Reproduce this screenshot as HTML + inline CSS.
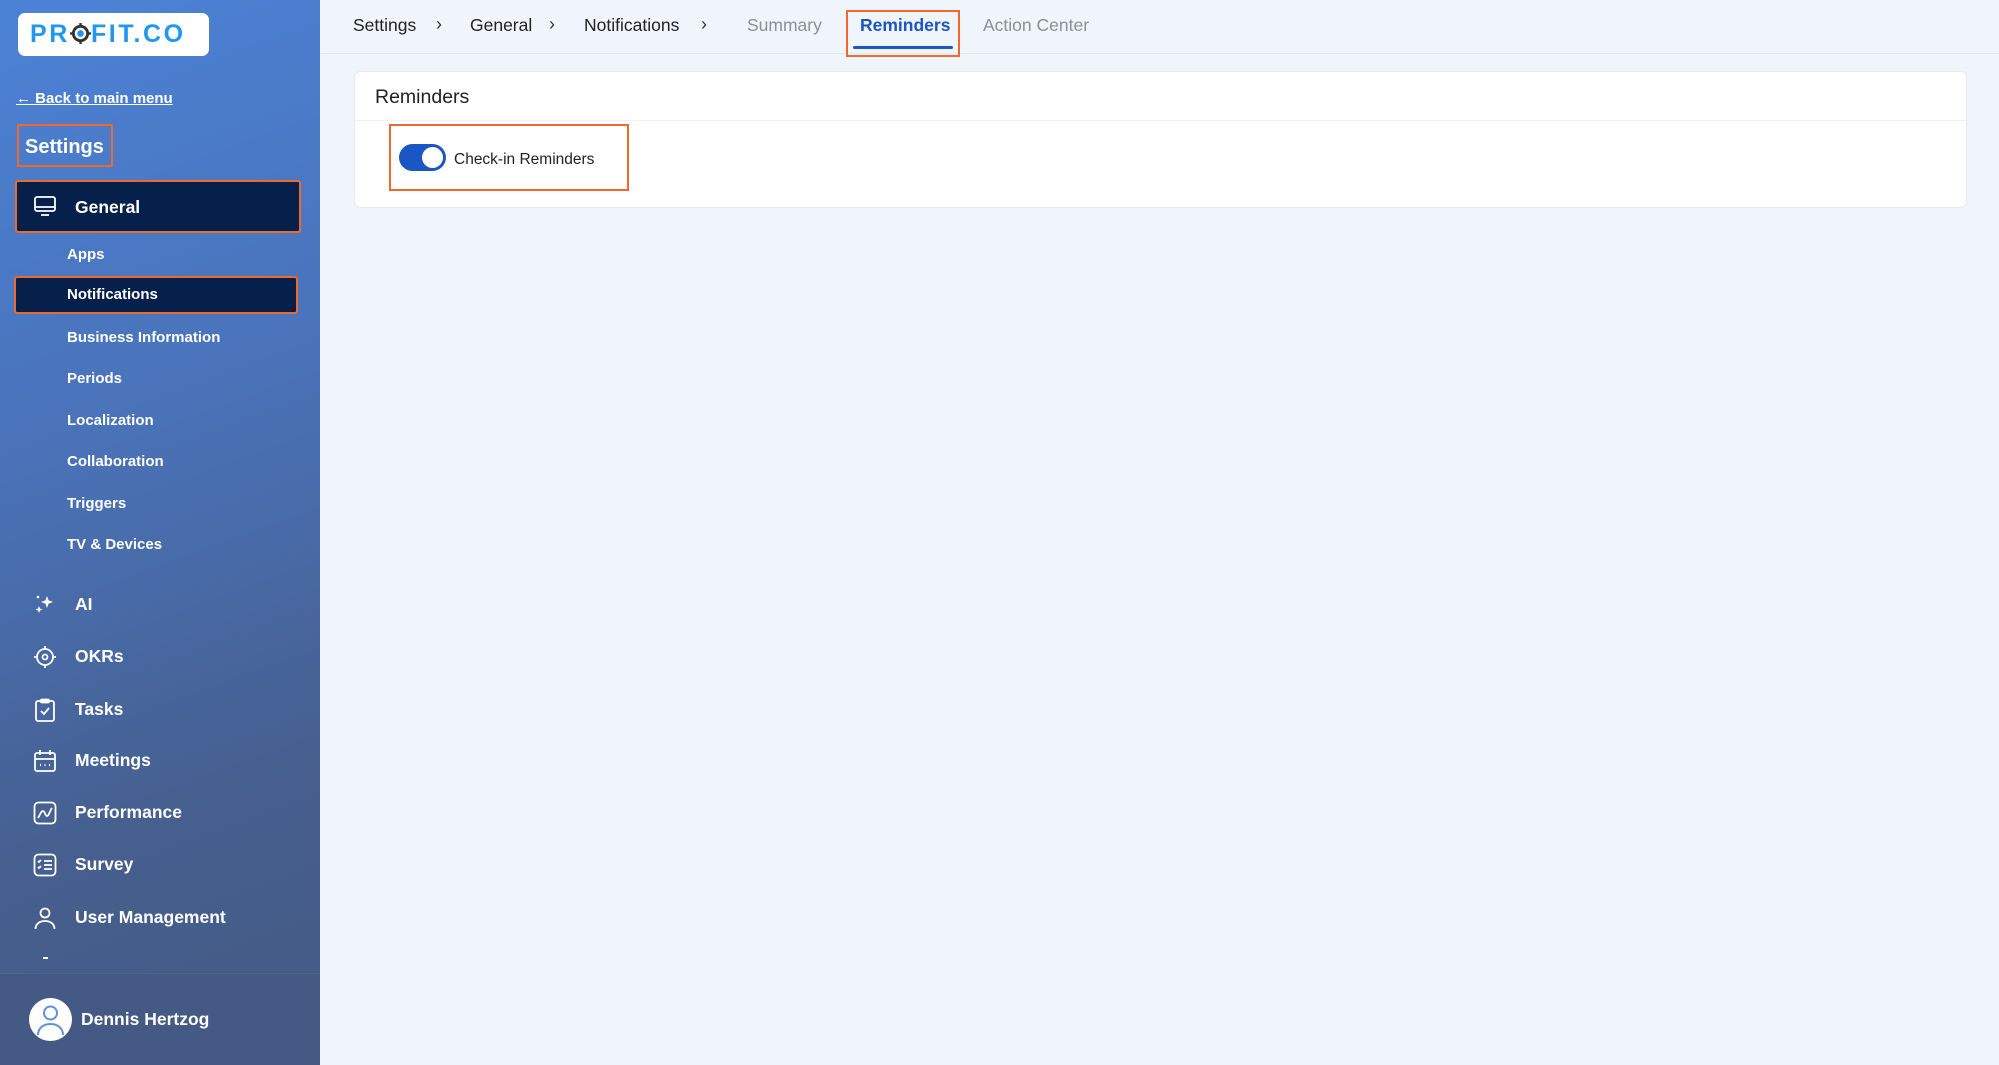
<!DOCTYPE html>
<html><head><meta charset="utf-8"><style>
*{margin:0;padding:0;box-sizing:border-box}
body{width:1999px;height:1065px;overflow:hidden;font-family:"Liberation Sans",sans-serif;background:#f0f4fb;position:relative}
.sb{position:absolute;left:0;top:0;width:320px;height:1065px;background:linear-gradient(160deg,#4b82d6 0%,#4a72b8 40%,#465f8e 75%,#445a84 100%);color:#fff}
.a{position:absolute;white-space:nowrap}
.logo{left:18px;top:13px;width:191px;height:43px;background:#fff;border-radius:7px;color:#2196f3;font-weight:bold;font-size:25px;letter-spacing:2.6px;line-height:43px;padding-left:12px}
.ob{border:2px solid #ee6a2c}
.sub{left:67px;font-size:15px;font-weight:bold}
.nav{left:75px;font-size:17.5px;font-weight:bold}
.ic{position:absolute;left:33px;width:24px;height:24px}
.top{position:absolute;left:320px;top:0;right:0;height:54px;border-bottom:1px solid #e2e7ef}
.bc{top:15px;font-size:17.5px;color:#222}
.chev{top:14px;font-size:18px;color:#333}
</style></head><body>
<div class="sb">
<div class="a logo">PR<span style="display:inline-block;width:21px;height:21px;vertical-align:-2px;position:relative"><svg width="21" height="21" viewBox="0 0 22 22"><circle cx="11" cy="11" r="7.5" fill="none" stroke="#333" stroke-width="3"/><line x1="11" y1="0" x2="11" y2="4" stroke="#333" stroke-width="2.5"/><line x1="11" y1="18" x2="11" y2="22" stroke="#333" stroke-width="2.5"/><line x1="0" y1="11" x2="4" y2="11" stroke="#333" stroke-width="2.5"/><line x1="18" y1="11" x2="22" y2="11" stroke="#333" stroke-width="2.5"/><circle cx="11" cy="11" r="3.5" fill="#2196f3"/></svg></span>FIT.CO</div>
<div class="a" style="left:16px;top:90px;font-size:15px;font-weight:bold;text-decoration:underline">← Back to main menu</div>
<div class="a ob" style="left:17px;top:124px;width:96px;height:43px;font-size:20px;font-weight:bold;padding:10px 0 0 6px">Settings</div>
<div class="a ob" style="left:15px;top:180px;width:286px;height:53px;background:#06204b;border-radius:3px"></div>
<svg class="ic" style="top:194px" viewBox="0 0 24 24" fill="none" stroke="#fff" stroke-width="1.8"><rect x="2" y="3" width="20" height="14" rx="2"/><line x1="2" y1="13" x2="22" y2="13"/><line x1="8" y1="21" x2="16" y2="21"/></svg>
<div class="a nav" style="top:197px">General</div>
<div class="a sub" style="top:246px">Apps</div>
<div class="a ob" style="left:14px;top:276px;width:284px;height:38px;background:#06204b;border-radius:3px"></div>
<div class="a sub" style="top:286px">Notifications</div>
<div class="a sub" style="top:329px">Business Information</div>
<div class="a sub" style="top:370px">Periods</div>
<div class="a sub" style="top:412px">Localization</div>
<div class="a sub" style="top:453px">Collaboration</div>
<div class="a sub" style="top:495px">Triggers</div>
<div class="a sub" style="top:536px">TV &amp; Devices</div>

<svg class="ic" style="top:593px" viewBox="0 0 24 24" fill="#fff"><path d="M14 3l1.6 4.4L20 9l-4.4 1.6L14 15l-1.6-4.4L8 9l4.4-1.6z"/><path d="M6 13l1 2.5 2.5 1-2.5 1L6 20l-1-2.5-2.5-1 2.5-1z"/><circle cx="5" cy="4" r="1.3"/></svg>
<div class="a nav" style="top:594px">AI</div>
<svg class="ic" style="top:645px" viewBox="0 0 24 24" fill="none" stroke="#fff" stroke-width="1.8"><circle cx="12" cy="12" r="8"/><circle cx="12" cy="12" r="2.5"/><path d="M12 1v4M12 19v4M1 12h4M19 12h4"/></svg>
<div class="a nav" style="top:646px">OKRs</div>
<svg class="ic" style="top:698px" viewBox="0 0 24 24" fill="none" stroke="#fff" stroke-width="1.8"><rect x="3" y="3" width="18" height="20" rx="2"/><rect x="8" y="1.5" width="8" height="3" rx="1"/><path d="M8 13l3 3 5-6"/></svg>
<div class="a nav" style="top:699px">Tasks</div>
<svg class="ic" style="top:749px" viewBox="0 0 24 24" fill="none" stroke="#fff" stroke-width="1.8"><rect x="2" y="4" width="20" height="18" rx="2"/><path d="M2 10h20M7 1v5M17 1v5"/><path d="M7 16h1M11.5 16h1M16 16h1" stroke-width="2.2"/></svg>
<div class="a nav" style="top:750px">Meetings</div>
<svg class="ic" style="top:801px" viewBox="0 0 24 24" fill="none" stroke="#fff" stroke-width="1.8"><rect x="1.5" y="1.5" width="21" height="21" rx="4"/><path d="M5 17c2-3 3-7 5-7s2 5 4 5 3-6 5-8"/></svg>
<div class="a nav" style="top:802px">Performance</div>
<svg class="ic" style="top:853px" viewBox="0 0 24 24" fill="none" stroke="#fff" stroke-width="1.8"><rect x="1.5" y="1.5" width="21" height="21" rx="4"/><path d="M11 8h8M11 12h8M11 16h8M5 8l1 1 2-2M5 14l1 1 2-2"/></svg>
<div class="a nav" style="top:854px">Survey</div>
<svg class="ic" style="top:906px" viewBox="0 0 24 24" fill="none" stroke="#fff" stroke-width="1.8"><circle cx="12" cy="7" r="4.5"/><path d="M2.5 23c0-5 4-8 9.5-8s9.5 3 9.5 8"/></svg>
<div class="a nav" style="top:907px">User Management</div>
<div class="a" style="left:43px;top:957px;width:5px;height:1.5px;background:#fff"></div>
<div class="a" style="left:0;top:973px;width:320px;height:92px;background:#445a84;border-top:1px solid #4e6591"></div>
<div class="a" style="left:29px;top:998px;width:43px;height:43px;border-radius:50%;background:#fff;overflow:hidden"><svg width="43" height="43" viewBox="0 0 43 43" fill="none" stroke="#5c8fd8" stroke-width="2"><circle cx="21.5" cy="15" r="6.5"/><path d="M9 37c0-7 5.5-11 12.5-11S34 30 34 37"/></svg></div>
<div class="a" style="left:81px;top:1009px;font-size:17.5px;font-weight:bold">Dennis Hertzog</div>
</div>

<div class="top"></div>
<div class="a bc" style="left:353px">Settings</div><div class="a chev" style="left:436px">›</div>
<div class="a bc" style="left:470px">General</div><div class="a chev" style="left:549px">›</div>
<div class="a bc" style="left:584px">Notifications</div><div class="a chev" style="left:701px">›</div>
<div class="a bc" style="left:747px;color:#8a8f99">Summary</div>
<div class="a ob" style="left:846px;top:10px;width:114px;height:47px"></div>
<div class="a bc" style="left:860px;color:#1a56c4;font-weight:bold">Reminders</div>
<div class="a" style="left:853px;top:46px;width:100px;height:3px;background:#1a56c4;border-radius:2px"></div>
<div class="a bc" style="left:983px;color:#8a8f99">Action Center</div>

<div class="a" style="left:354px;top:71px;width:1613px;height:137px;background:#fff;border-radius:6px;border:1px solid #e6eaf1"></div>
<div class="a" style="left:375px;top:86px;font-size:19.5px;color:#222">Reminders</div>
<div class="a" style="left:355px;top:120px;width:1611px;height:1px;background:#edf0f5"></div>
<div class="a ob" style="left:389px;top:124px;width:240px;height:67px"></div>
<div class="a" style="left:399px;top:144px;width:47px;height:27px;border-radius:14px;background:#1a56c4"><div style="position:absolute;right:3px;top:3px;width:21px;height:21px;border-radius:50%;background:#fff"></div></div>
<div class="a" style="left:454px;top:151px;font-size:15.5px;color:#222">Check-in Reminders</div>
</body></html>
